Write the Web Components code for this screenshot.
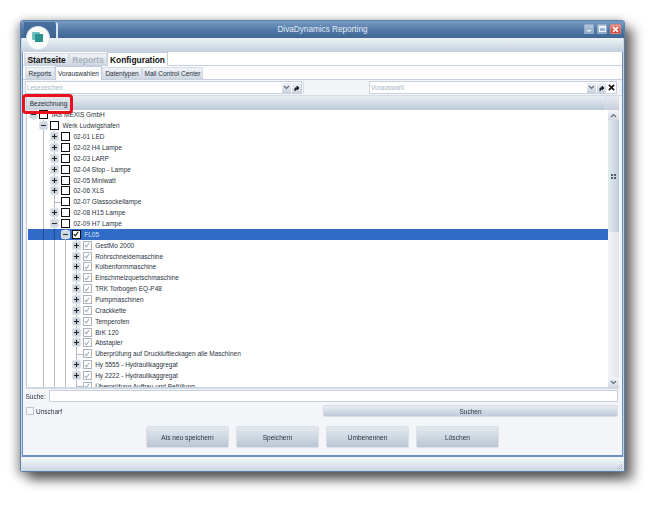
<!DOCTYPE html>
<html>
<head>
<meta charset="utf-8">
<title>DivaDynamics Reporting</title>
<style>
    html, body { margin: 0; background: #fff; height: 513px; overflow: hidden; }
    body { box-sizing: border-box; padding: 20px 0 0 20px; font-family: "Liberation Sans", Arial, sans-serif; font-size: 6.5px; color: #26303c; }
</style>
</head>
<body>
<diva-window>
    <diva-tabs kind="main" active="Konfiguration" disabled="Reports" tabs="Startseite:45,Reports:38,Konfiguration:61"></diva-tabs>
    <diva-tabs kind="sub" active="Vorauswahlen" tabs="Reports:30,Vorauswahlen:47,Datentypen:40,Mail Control Center:61"></diva-tabs>
    <diva-toolbar></diva-toolbar>
    <diva-tree>
        <tree-row level="0" exp="minus" check="black">IAS MEXIS GmbH</tree-row>
        <tree-row level="1" guides="" exp="minus" check="black">Werk Ludwigshafen</tree-row>
        <tree-row level="2" guides="1" exp="plus" check="black">02-01 LED</tree-row>
        <tree-row level="2" guides="1" exp="plus" check="black">02-02 H4 Lampe</tree-row>
        <tree-row level="2" guides="1" exp="plus" check="black">02-03 LARP</tree-row>
        <tree-row level="2" guides="1" exp="plus" check="black">02-04 Stop - Lampe</tree-row>
        <tree-row level="2" guides="1" exp="plus" check="black">02-05 Miniwatt</tree-row>
        <tree-row level="2" guides="1" exp="plus" check="black">02-06 XLS</tree-row>
        <tree-row level="2" guides="1" exp="leaf" check="black">02-07 Glassockellampe</tree-row>
        <tree-row level="2" guides="1" exp="plus" check="black">02-08 H15 Lampe</tree-row>
        <tree-row level="2" guides="1" exp="minus" check="black">02-09 H7 Lampe</tree-row>
        <tree-row level="3" guides="1,2" exp="minus" check="tick" selected>FL05</tree-row>
        <tree-row level="4" guides="1,2,3" exp="plus" check="grey">GestMo 2000</tree-row>
        <tree-row level="4" guides="1,2,3" exp="plus" check="grey">Rohrschneidemaschine</tree-row>
        <tree-row level="4" guides="1,2,3" exp="plus" check="grey">Kolbenformmaschine</tree-row>
        <tree-row level="4" guides="1,2,3" exp="plus" check="grey">Einschmelzquetschmaschine</tree-row>
        <tree-row level="4" guides="1,2,3" exp="plus" check="grey">TRK Torbogen EQ-P48</tree-row>
        <tree-row level="4" guides="1,2,3" exp="plus" check="grey">Pumpmaschinen</tree-row>
        <tree-row level="4" guides="1,2,3" exp="plus" check="grey">Crackkette</tree-row>
        <tree-row level="4" guides="1,2,3" exp="plus" check="grey">Temperofen</tree-row>
        <tree-row level="4" guides="1,2,3" exp="plus" check="grey">BrK 120</tree-row>
        <tree-row level="4" guides="1,2,3" exp="plus" check="grey">Abstapler</tree-row>
        <tree-row level="4" guides="1,2,3" exp="leaf" check="grey">Überprüfung auf Druckluftleckagen alle Maschinen</tree-row>
        <tree-row level="4" guides="1,2,3" exp="plus" check="grey">Hy 5555 - Hydraulikaggregat</tree-row>
        <tree-row level="4" guides="1,2,3" exp="plus" check="grey">Hy 2222 - Hydraulikaggregat</tree-row>
        <tree-row level="4" guides="1,2,3" exp="leaf" check="grey">Überprüfung Aufbau und Befüllung</tree-row>
    </diva-tree>
    <diva-search></diva-search>
    <diva-actions>
        <diva-button>Als neu speichern</diva-button>
        <diva-button>Speichern</diva-button>
        <diva-button>Umbenennen</diva-button>
        <diva-button>Löschen</diva-button>
    </diva-actions>
</diva-window>

<script>
const chevron = (dir) => `<svg width="7" height="5" viewBox="0 0 7 5"><path d="${dir === 'up' ? 'M1 4 3.5 1.5 6 4' : 'M1 1 3.5 3.5 6 1'}" fill="none" stroke="#5d6c7e" stroke-width="1.2"/></svg>`;
const jump = `<svg width="8" height="8" viewBox="0 0 8 8"><path d="M2 7V4h3M4 2l2 2-2 2z" fill="#1c2430" stroke="#1c2430" stroke-width="1"/></svg>`;
const cross = `<svg width="7" height="7" viewBox="0 0 8 8"><path d="M1 1 7 7M7 1 1 7" stroke="#111" stroke-width="1.9"/></svg>`;

class DivaWindow extends HTMLElement {
    constructor() {
        super();
        this.attachShadow({mode: 'open'});
        this.shadowRoot.innerHTML = `
            <style>
                :host {
                    display: block;
                    position: relative;
                    width: 605px;
                    height: 452px;
                    box-sizing: border-box;
                    filter: blur(.4px);
                    border: 1px solid #5b80aa;
                    border-radius: 3px 3px 2px 2px;
                    background: #c3d4e6;
                    box-shadow: 8px 8px 12px rgba(30,30,30,.65), 0 -2px 8px rgba(0,0,0,.14), -4px 4px 10px rgba(0,0,0,.28);
                }
                #shell { display: flex; flex-direction: column; height: 100%; }
                #title {
                    flex: none;
                    height: 17px;
                    display: flex;
                    align-items: center;
                    justify-content: center;
                    color: #e4ebf4;
                    font-size: 8.2px;
                    background: linear-gradient(#7a9cc2, #4f78a6 55%, #3f6796);
                }
                #band {
                    flex: none;
                    height: 14px;
                    margin: 0 1px;
                    background: linear-gradient(#eef2f6, #c3d0de);
                }
                #body {
                    flex: 1;
                    min-height: 0;
                    margin: 0 1px;
                    display: flex;
                    flex-direction: column;
                    background: #f3f5f8;
                    border: 1px solid #6a90bb;
                    border-width: 0 1px 2px;
                }
                #status {
                    flex: none;
                    height: 14px;
                    background: linear-gradient(#f6f8fa, #ccd7e3);
                }
                #controls {
                    position: absolute;
                    top: 3px;
                    right: 3px;
                    display: flex;
                    gap: 3px;
                }
                #controls span {
                    width: 10px;
                    height: 10px;
                    box-sizing: border-box;
                    border: 1px solid #94aecb;
                    border-radius: 1px;
                    background: linear-gradient(#b4c7dc, #8ca8c6);
                    display: flex;
                    align-items: center;
                    justify-content: center;
                }
                #controls .close { width: 11px; border-color: #d78a80; background: linear-gradient(#ef8d80, #d6352b); }
                #logo {
                    position: absolute;
                    left: 6px;
                    top: 6px;
                    width: 22px;
                    height: 22px;
                    border-radius: 50%;
                    background: #fbfcfc;
                    box-shadow: 0 0 0 1px #dfe6ee;
                }
                #notch {
                    position: absolute;
                    left: 3px;
                    top: 1px;
                    width: 32px;
                    height: 16px;
                    border-radius: 0 3px 0 0;
                    background: linear-gradient(#48709f, #3d6493);
                    border-right: 2px solid #dbe5ef;
                }
                #logo svg { position: absolute; left: 5px; top: 5px; }
                #marker {
                    position: absolute;
                    left: 1px;
                    top: 73px;
                    width: 45px;
                    height: 14px;
                    border: 3px solid #ea0f1b;
                    border-radius: 4px;
                }
                #grip { position: absolute; right: 1px; bottom: 1px; }
            </style>
            <div id="shell">
                <div id="title">DivaDynamics Reporting</div>
                <div id="band"></div>
                <div id="body"><slot></slot></div>
                <div id="status"></div>
            </div>
            <div id="notch"></div>
            <div id="logo">
                <svg width="12" height="11" viewBox="0 0 12 11">
                    <rect x="0" y="0" width="8" height="8" rx="1" fill="#6cc0bd"/>
                    <rect x="3" y="2" width="8" height="8" fill="#2f918f"/>
                </svg>
            </div>
            <div id="controls">
                <span><svg width="6" height="6"><rect x="1" y="4" width="4" height="1.4" fill="#eef3f8"/></svg></span>
                <span><svg width="7" height="6"><rect x=".5" y=".5" width="6" height="5" fill="none" stroke="#eef3f8"/><rect x="1" y="1" width="5" height="1" fill="#eef3f8"/></svg></span>
                <span class="close"><svg width="7" height="7"><path d="M1 1 6 6M6 1 1 6" stroke="#fff" stroke-width="1.7"/></svg></span>
            </div>
            <div id="marker"></div>
            <svg id="grip" width="7" height="7"><path d="M5 1h1v1H5zM3 3h1v1H3zM5 3h1v1H5zM1 5h1v1H1zM3 5h1v1H3zM5 5h1v1H5z" fill="#9fb0c2"/></svg>
        `;
    }
}

class DivaTabs extends HTMLElement {
    constructor() {
        super();
        this.attachShadow({mode: 'open'});
    }

    connectedCallback() {
        const active = this.getAttribute('active');
        const disabled = this.getAttribute('disabled');
        const tabs = this.getAttribute('tabs').split(',').map(t => t.split(':'));
        this.shadowRoot.innerHTML = `
            <style>
                :host {
                    display: flex;
                    height: 14px;
                    box-sizing: border-box;
                    align-items: flex-end;
                    background: #fff;
                    border-bottom: 1px solid #c4d0dd;
                }
                :host([kind="main"]) { padding-left: 1px; font: bold 8.4px "Liberation Sans", Arial, sans-serif; color: #111; }
                :host([kind="sub"]) { padding-left: 2px; font-size: 6.5px; }
                div {
                    box-sizing: border-box;
                    height: 12px;
                    display: flex;
                    align-items: center;
                    justify-content: center;
                    white-space: nowrap;
                    border: 1px solid #d3dbe4;
                    border-bottom: 0;
                    background: linear-gradient(#f2f4f7, #cdd6e0);
                }
                .active {
                    height: 14px;
                    margin-bottom: -1px;
                    background: #fff;
                    border-color: #c2cedb;
                }
                .off { color: #a7b2c0; }
            </style>
            ${tabs.map(([label, w]) => `<div style="width:${w}px" class="${label === active ? 'active' : ''} ${label === disabled ? 'off' : ''}">${label}</div>`).join('')}
        `;
    }
}

class DivaCombo extends HTMLElement {
    constructor() {
        super();
        this.attachShadow({mode: 'open'});
        this.shadowRoot.innerHTML = `
            <style>
                :host {
                    display: flex;
                    align-items: center;
                    box-sizing: border-box;
                    height: 13px;
                    padding-left: 1px;
                    gap: 1px;
                    background: #fff;
                    border: 1px solid #c8d2dd;
                    color: #a9b4c2;
                    font-size: 6.4px;
                }
                #text { flex: 1; }
                ::slotted(*) { flex: none; }
            </style>
            <span id="text"><slot></slot></span>
            <slot name="btn"></slot>
        `;
    }
}

class DivaToolbar extends HTMLElement {
    constructor() {
        super();
        this.attachShadow({mode: 'open'});
        this.shadowRoot.innerHTML = `
            <style>
                :host {
                    display: flex;
                    height: 16px;
                    box-sizing: border-box;
                    align-items: center;
                    padding: 0 0 0 2px;
                    background: #f2f4f7;
                    border-bottom: 1px solid #d4dce5;
                }
                #bookmarks { flex: none; width: 277px; }
                #sep { flex: none; width: 1px; height: 13px; background: #d7dee6; margin-left: 1px; }
                #gap { flex: none; width: 65px; }
                #presets { flex: none; width: 248px; }
                .b {
                    width: 9px;
                    height: 10px;
                    display: flex;
                    align-items: center;
                    justify-content: center;
                    background: linear-gradient(#eef1f5, #c7d1dc);
                }
                .p { background: none; }
            </style>
            <diva-combo id="bookmarks">Lesezeichen
                <span slot="btn" class="b">${chevron('down')}</span>
                <span slot="btn" class="b">${jump}</span>
            </diva-combo>
            <div id="sep"></div>
            <div id="gap"></div>
            <diva-combo id="presets">Vorauswahl
                <span slot="btn" class="b">${chevron('down')}</span>
                <span slot="btn" class="b">${jump}</span>
                <span slot="btn" class="b p">${cross}</span>
            </diva-combo>
        `;
    }
}

class DivaTree extends HTMLElement {
    constructor() {
        super();
        this.attachShadow({mode: 'open'});
        this.shadowRoot.innerHTML = `
            <style>
                :host {
                    display: block;
                    height: 291px;
                    margin: 0 3px 0 3px;
                    background: #fff;
                    overflow: hidden;
                    border-left: 1px solid #c2ccd8;
                    border-bottom: 2px solid #ced8e2;
                }
                #head {
                    display: flex;
                    height: 14px;
                    box-sizing: border-box;
                    background: linear-gradient(#e9edf2, #bcc9d8);
                }
                #head div {
                    width: 43px;
                    display: flex;
                    align-items: center;
                    justify-content: center;
                    border-right: 1px solid #c2ccd8;
                    background: linear-gradient(#e6eaef, #c6d0db);
                    color: #26303c;
                    font-size: 6.5px;
                }
                #head i { flex: 1; }
                #head b { width: 13px; background: linear-gradient(#e6ebf0, #c5d0dc); border-left: 1px solid #d5dde6; }
                #main { display: flex; height: 277px; }
                #rows { flex: 1; min-width: 0; padding-left: .6px; margin-top: -.5px; }
                #bar {
                    width: 11px;
                    display: flex;
                    flex-direction: column;
                    align-items: center;
                    background: #e9edf2;
                }
                #up, #down {
                    flex: none;
                    width: 100%;
                    height: 10px;
                    display: flex;
                    align-items: center;
                    justify-content: center;
                    background: linear-gradient(#f3f5f8, #d3dbe4);
                }
                #thumb {
                    flex: none;
                    width: 100%;
                    height: 112px;
                    display: flex;
                    align-items: center;
                    justify-content: center;
                    background: linear-gradient(90deg, #e6ebf1, #c0ccda);
                }
                #track { flex: 1; width: 100%; background: linear-gradient(90deg, #f1f3f6, #dfe5eb); }
            </style>
            <div id="head"><div>Bezeichnung</div><i></i><b></b></div>
            <div id="main">
                <div id="rows"><slot></slot></div>
                <div id="bar">
                    <div id="up">${chevron('up')}</div>
                    <div id="thumb"><svg width="5" height="5"><path d="M0 0h2v2H0zM3 0h2v2H3zM0 3h2v2H0zM3 3h2v2H3z" fill="#4f5b68"/></svg></div>
                    <div id="track"></div>
                    <div id="down">${chevron('down')}</div>
                </div>
            </div>
        `;
    }
}

class TreeRow extends HTMLElement {
    constructor() {
        super();
        this.attachShadow({mode: 'open'});
    }

    connectedCallback() {
        const level = +this.getAttribute('level');
        const guides = (this.getAttribute('guides') || '').split(',').filter(Boolean).map(Number);
        const exp = this.getAttribute('exp');
        const check = this.getAttribute('check');
        let cells = '';
        for (let i = 0; i < level; i++) {
            cells += `<span class="cell ${guides.includes(i) ? 'guide' : ''}"></span>`;
        }
        const sign = exp === 'plus'
            ? '<path d="M1 3.5h5M3.5 1v5" stroke="#222" stroke-width="1.1"/>'
            : '<path d="M1 3.5h5" stroke="#2a2f36" stroke-width="1.1"/>';
        const expander = exp === 'leaf'
            ? '<span class="cell leaf"></span>'
            : `<span class="cell conn"><svg class="box" width="7" height="7" viewBox="0 0 7 7">${sign}</svg></span>`;
        const tick = check === 'black' ? '' : '<svg width="6" height="6" viewBox="0 0 6 6"><path d="M.8 3 2.3 4.8 5.2 .8" fill="none" stroke="currentColor" stroke-width="1.1"/></svg>';
        this.shadowRoot.innerHTML = `
            <style>
                :host {
                    display: flex;
                    align-items: stretch;
                    height: 10.86px;
                    white-space: nowrap;
                    font-size: 6.5px;
                    color: #2a3440;
                }
                :host([selected]) { background: #2f6bc7; color: #d6e4f6; }
                .cell {
                    flex: none;
                    width: 10.86px;
                    position: relative;
                    display: flex;
                    align-items: center;
                    justify-content: center;
                }
                .guide, .conn, .leaf {
                    background: linear-gradient(#b5bcc6, #b5bcc6) center / 1px 100% no-repeat;
                }
                :host([selected]) .guide { background-image: linear-gradient(#1d4a90, #1d4a90); }
                .leaf::after {
                    content: "";
                    position: absolute;
                    left: 5.4px;
                    right: -1px;
                    top: 5.4px;
                    height: 1px;
                    background: #b5bcc6;
                }
                .box { background: #cfd7e1; border-radius: 1px; box-shadow: 0 0 0 1px #dde3ea; }
                .mark {
                    box-sizing: border-box;
                    width: 9px;
                    height: 9px;
                    display: flex;
                    align-items: center;
                    justify-content: center;
                    background: #fff;
                    color: #111;
                    border: 1.3px solid #111;
                }
                .mark.grey { border: 1px solid #aeb3b9; color: #a7acb3; }
                #label { padding-left: 2.4px; align-self: center; }
            </style>
            ${cells}${expander}
            <span class="cell"><span class="mark ${check}">${tick}</span></span>
            <span id="label"><slot></slot></span>
        `;
    }
}

class DivaSearch extends HTMLElement {
    constructor() {
        super();
        this.attachShadow({mode: 'open'});
        this.shadowRoot.innerHTML = `
            <style>
                :host {
                    display: grid;
                    grid-template-columns: 297.5px 295px;
                    grid-template-rows: 12px 12px;
                    row-gap: 3px;
                    padding: 1px 0 0 2.5px;
                    font-size: 6.5px;
                    color: #2a3440;
                }
                #find { grid-column: 1 / 3; display: flex; align-items: center; gap: 3px; }
                #find i { flex: 1; height: 100%; box-sizing: border-box; background: #fff; border: 1px solid #c5d0dc; }
                #fuzzy { display: flex; align-items: center; gap: 2.5px; }
                #fuzzy i { width: 8px; height: 8px; box-sizing: border-box; background: #f4f6f8; border: 1px solid #bcc6d1; }
                #go {
                    display: flex;
                    align-items: center;
                    justify-content: center;
                    border-radius: 2px;
                    background: linear-gradient(#e6ebf0, #bfcbd9);
                    border: 1px solid #d5dde6;
                    box-sizing: border-box;
                }
            </style>
            <div id="find"><span>Suche:</span><i></i></div>
            <div id="fuzzy"><i></i><span>Unscharf</span></div>
            <div id="go">Suchen</div>
        `;
    }
}

class DivaActions extends HTMLElement {
    constructor() {
        super();
        this.attachShadow({mode: 'open'});
        this.shadowRoot.innerHTML = `
            <style>
                :host {
                    display: flex;
                    gap: 7px;
                    padding: 9px 0 0 123px;
                }
            </style>
            <slot></slot>
        `;
    }
}

class DivaButton extends HTMLElement {
    constructor() {
        super();
        this.attachShadow({mode: 'open'});
        this.shadowRoot.innerHTML = `
            <style>
                :host {
                    display: flex;
                    align-items: center;
                    justify-content: center;
                    box-sizing: border-box;
                    width: 83px;
                    height: 22px;
                    border: 1px solid #d9e0e8;
                    border-radius: 2px;
                    background: linear-gradient(#e4e9ef, #b9c5d4);
                    color: #2a3440;
                    font-size: 6.6px;
                }
            </style>
            <slot></slot>
        `;
    }
}

customElements.define('diva-window', DivaWindow);
customElements.define('diva-tabs', DivaTabs);
customElements.define('diva-combo', DivaCombo);
customElements.define('diva-toolbar', DivaToolbar);
customElements.define('diva-tree', DivaTree);
customElements.define('tree-row', TreeRow);
customElements.define('diva-search', DivaSearch);
customElements.define('diva-actions', DivaActions);
customElements.define('diva-button', DivaButton);
</script>
</body>
</html>
